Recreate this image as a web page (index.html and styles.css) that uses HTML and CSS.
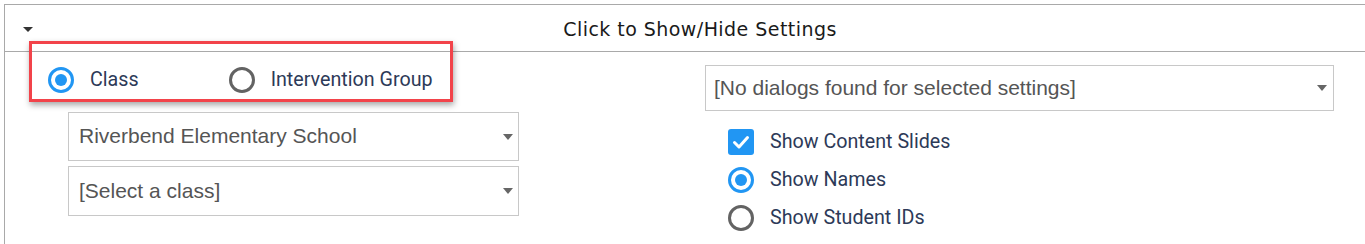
FILE: index.html
```html
<!DOCTYPE html>
<html>
<head>
<meta charset="utf-8">
<link rel="stylesheet" href="styles.css">
</head>
<body>
<div class="panel">
  <div class="header">
    <span class="caret-cell"><span class="caret"></span></span>
    <span class="title">Click to Show/Hide Settings</span>
  </div>
  <div class="content">
    <div class="left">
      <div class="mode-row">
        <label class="opt"><span class="radio on"></span><span class="lbl">Class</span></label>
        <label class="opt opt2"><span class="radio"></span><span class="lbl">Intervention Group</span></label>
        <div class="highlight"></div>
      </div>
      <div class="select s1"><span class="val">Riverbend Elementary School</span><span class="arrow"></span></div>
      <div class="select s2"><span class="val">[Select a class]</span><span class="arrow"></span></div>
    </div>
    <div class="right">
      <div class="select wide"><span class="val">[No dialogs found for selected settings]</span><span class="arrow"></span></div>
      <div class="checks">
        <label class="opt row"><span class="check"><svg viewBox="0 0 26 26" width="26" height="26"><path d="M6.5 13.5 L11 18 L19.5 8.5" fill="none" stroke="#fff" stroke-width="3" stroke-linecap="round" stroke-linejoin="round"/></svg></span><span class="lbl">Show Content Slides</span></label>
        <label class="opt row"><span class="radio on"></span><span class="lbl">Show Names</span></label>
        <label class="opt row"><span class="radio"></span><span class="lbl">Show Student IDs</span></label>
      </div>
    </div>
  </div>
</div>
</body>
</html>
```

FILE: styles.css
```css
html, body {
  margin: 0;
  padding: 0;
  background: #ffffff;
}
body {
  padding: 4px 0 0 4px;
  height: 240px;
  overflow: hidden;
}
.panel {
  border-top: 1px solid #a9a9a9;
  border-left: 1px solid #a9a9a9;
  height: 239px;
}
.header {
  display: flex;
  align-items: center;
  height: 46px;
  border-bottom: 1px solid #a9a9a9;
}
.caret-cell {
  width: 30px;
  display: flex;
  justify-content: flex-start;
  padding-left: 18px;
  box-sizing: border-box;
}
.caret {
  width: 0;
  height: 0;
  border-left: 5px solid transparent;
  border-right: 5px solid transparent;
  border-top: 5.5px solid #333;
  margin-top: 2px;
}
.title {
  flex: 1;
  text-align: center;
  font-family: "DejaVu Sans", Verdana, sans-serif;
  font-size: 19px;
  letter-spacing: 0.45px;
  color: #1a1a1a;
  padding-top: 2px;
}
.content {
  display: flex;
}
.left {
  width: 700px;
}
.mode-row {
  position: relative;
  display: flex;
  align-items: center;
  padding: 14px 0 0 43px;
  height: 27px;
}
.opt {
  display: flex;
  align-items: center;
  font-family: Roboto, "Noto Sans", sans-serif;
  font-size: 19.7px;
  color: #2d3a58;
}
.opt .lbl {
  margin-left: 16px;
}
.opt2 {
  margin-left: 90px;
}
.radio {
  width: 26px;
  height: 26px;
  box-sizing: border-box;
  border: 3px solid #636363;
  border-radius: 50%;
  display: flex;
  align-items: center;
  justify-content: center;
  flex: none;
}
.radio.on {
  border-color: #2196f3;
}
.radio.on::after {
  content: "";
  width: 12px;
  height: 12px;
  border-radius: 50%;
  background: #2196f3;
}
.highlight {
  position: absolute;
  left: 24px;
  top: -11px;
  width: 418px;
  height: 55px;
  border: 3px solid #f2434a;
  box-shadow: 1px 3px 6px rgba(0, 0, 0, 0.35);
  pointer-events: none;
}
.select {
  display: flex;
  align-items: center;
  justify-content: space-between;
  box-sizing: border-box;
  border: 1px solid #c8c8c8;
  font-family: "Liberation Sans", Arial, sans-serif;
  font-size: 21px;
  color: #555555;
  padding: 0 5px 0 10px;
}
.s1 {
  margin: 19px 0 0 63px;
  width: 451px;
  height: 49px;
}
.s2 {
  margin: 5px 0 0 63px;
  width: 451px;
  height: 50px;
}
.val {
  padding-bottom: 1px;
}
.arrow {
  width: 0;
  height: 0;
  border-left: 5px solid transparent;
  border-right: 5px solid transparent;
  border-top: 6px solid #666;
}
.wide {
  margin-top: 13px;
  width: 629px;
  height: 46px;
  padding-left: 8px;
  padding-right: 6px;
}
.checks {
  display: flex;
  flex-direction: column;
  padding: 17px 0 0 23px;
  gap: 11px;
}
.row {
  height: 27px;
}
.check {
  width: 26px;
  height: 26px;
  border-radius: 3px;
  background: #2196f3;
  display: flex;
  flex: none;
}
```
